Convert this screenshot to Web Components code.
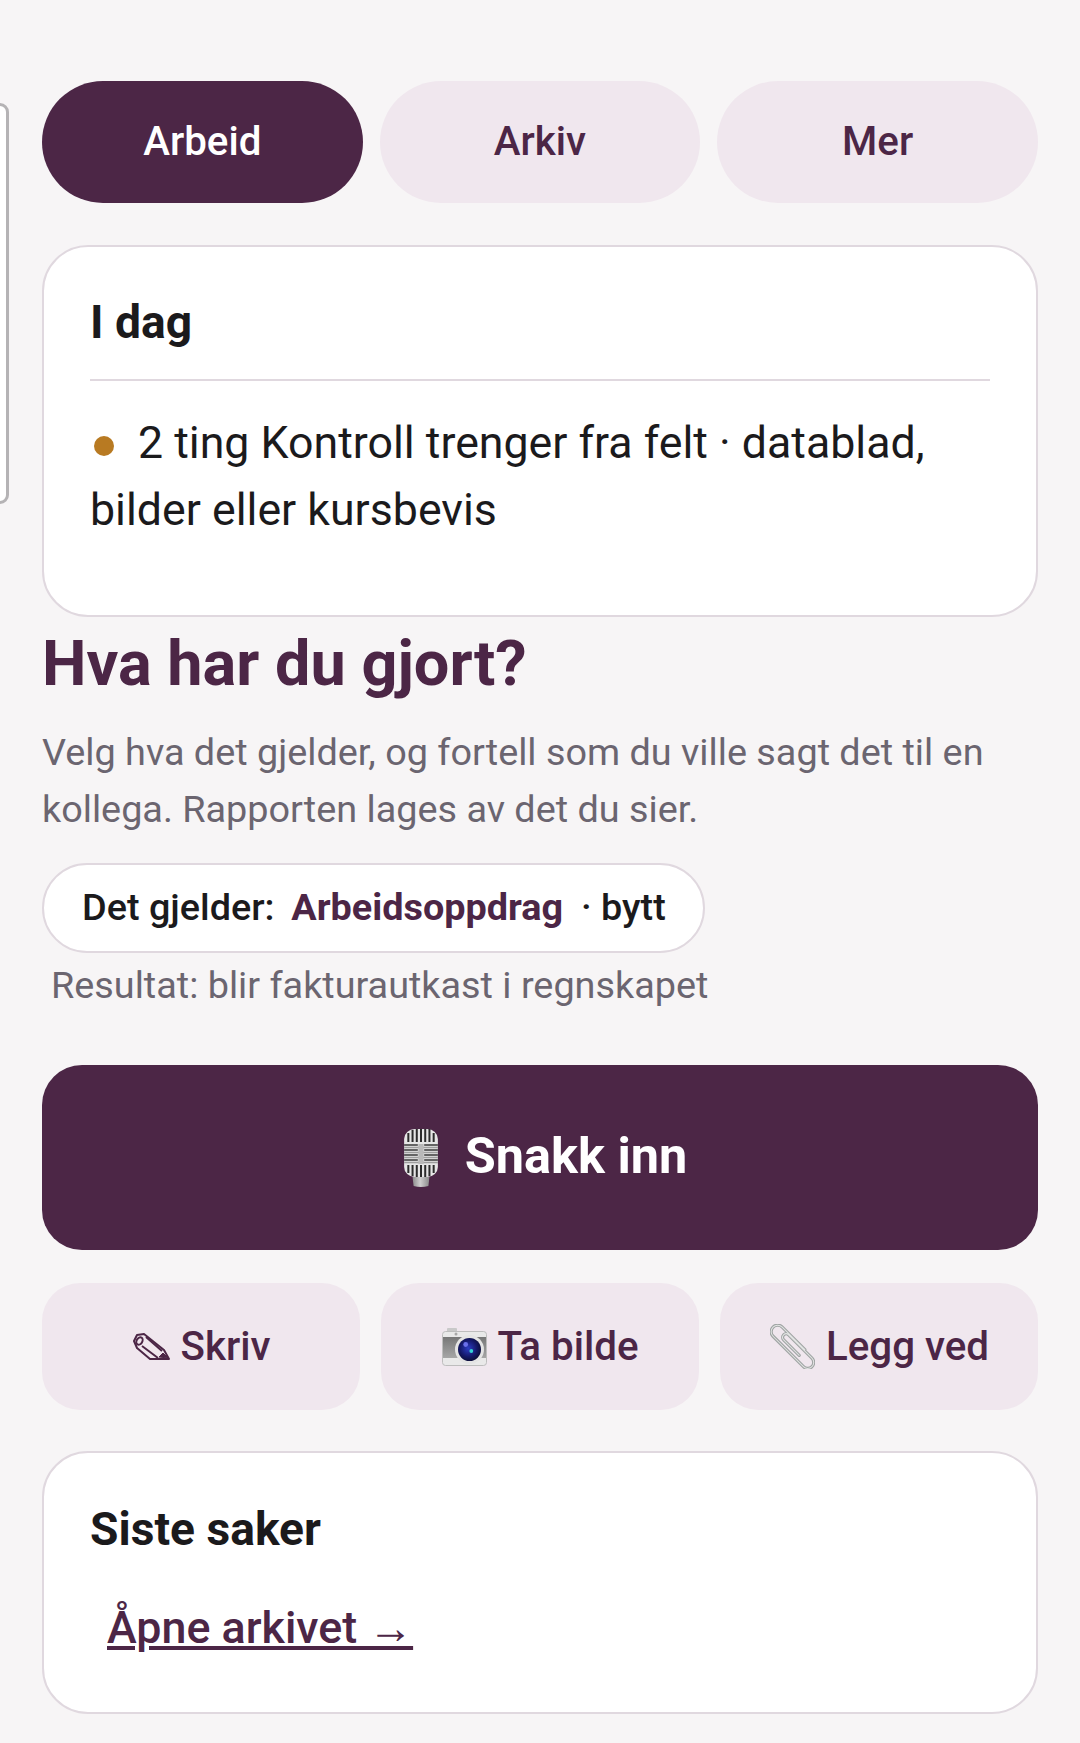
<!DOCTYPE html>
<html lang="no">
<head>
<meta charset="utf-8">
<title>Hva har du gjort?</title>
<style>
  html, body { margin: 0; padding: 0; background: #f7f5f6; }
  body { font-family: Roboto, "Liberation Sans", sans-serif; color: #1b1a1c; }
</style>
</head>
<body>
<work-page>
  <side-sliver slot="overlay"></side-sliver>
  <tab-bar>
    <tab-pill active>Arbeid</tab-pill>
    <tab-pill>Arkiv</tab-pill>
    <tab-pill>Mer</tab-pill>
  </tab-bar>
  <info-card heading="I dag">
    <span class="dot"></span>2 ting Kontroll trenger fra felt · datablad, bilder eller kursbevis
  </info-card>
  <intro-text heading="Hva har du gjort?">Velg hva det gjelder, og fortell som du ville sagt det til en kollega. Rapporten lages av det du sier.</intro-text>
  <subject-pill value="Arbeidsoppdrag" note="Resultat: blir fakturautkast i regnskapet"></subject-pill>
  <talk-button>
    <svg slot="icon" width="38" height="58" viewBox="0 0 36 58" preserveAspectRatio="none">
      <defs>
        <linearGradient id="neck" x1="0" x2="1" y1="0" y2="0">
          <stop offset="0" stop-color="#8c8c8c"/><stop offset=".45" stop-color="#cfcfcf"/><stop offset="1" stop-color="#8a8a8a"/>
        </linearGradient>
      </defs>
      <path d="M10 48h16l-1 9q-7 2-14 0z" fill="url(#neck)"/>
      <rect x="2" y="0" width="32" height="48" rx="10" fill="#e6e6e6"/>
      <path d="M6 4v9M10 1v12M14 0v13M18 0v13M22 0v13M26 0v13M30 4v9M6 36v8M10 36v11M14 36v12M18 36v12M22 36v12M26 36v11M30 36v8" stroke="#2b2b2b" stroke-width="1.9"/>
      <path d="M2 16h13M21 16h13M2 21h13M21 21h13M2 26h13M21 26h13M2 31h13M21 31h13" stroke="#3a3a3a" stroke-width="1.6"/>
      <path d="M2 18.5h32M2 23.5h32M2 28.5h32M2 33.5h32" stroke="#9d9d9d" stroke-width="1.4"/>
      <rect x="15.5" y="15" width="5" height="20" fill="#b9b9b9"/>
    </svg>
    Snakk inn
  </talk-button>
  <action-row>
    <action-button box="40" gap="9">
      <svg slot="icon" width="37" height="27" viewBox="0 0 37 27" fill="none" stroke="#4c2646" stroke-width="2" stroke-linejoin="round">
        <path d="M1 8 4 2l7-1 20 16 5 9H17L4 15z"/>
        <ellipse cx="6.5" cy="8" rx="2.8" ry="4" transform="rotate(30 6.5 8)"/>
        <path d="M9 13 25 25M13 4 29 18"/>
        <path d="M26 24l4-4 5 5z" fill="#4c2646" stroke-width="1"/>
      </svg>
      Skriv
    </action-button>
    <action-button box="46" gap="10">
      <svg slot="icon" width="45" height="38" viewBox="0 0 45 38">
        <defs>
          <linearGradient id="band" x1="0" x2="0" y1="0" y2="1">
            <stop offset="0" stop-color="#777"/><stop offset="1" stop-color="#a6a6a6"/>
          </linearGradient>
          <radialGradient id="glass" cx=".45" cy=".45" r=".6">
            <stop offset="0" stop-color="#2c3cc4"/><stop offset=".6" stop-color="#15196a"/><stop offset="1" stop-color="#0a0c30"/>
          </radialGradient>
        </defs>
        <rect x="5" y="0" width="10" height="6" rx="1" fill="#c9c9c9"/>
        <rect x=".5" y="3.5" width="44" height="34" rx="3" fill="#e9e9e9" stroke="#bdbdbd"/>
        <rect x="1" y="9" width="43" height="21" fill="url(#band)"/>
        <circle cx="14" cy="6" r="1.5" fill="#a8a8a8"/>
        <circle cx="27.5" cy="21.5" r="14.5" fill="#e4e4e4"/>
        <circle cx="27.5" cy="21.5" r="11.5" fill="url(#glass)"/>
        <circle cx="23.7" cy="16.5" r="2.4" fill="#6a70ea"/>
        <circle cx="29.3" cy="23" r="1.9" fill="#36d3d6"/>
      </svg>
      Ta bilde
    </action-button>
    <action-button box="47" gap="10">
      <svg slot="icon" width="45" height="45" viewBox="0 0 45 45" fill="none" stroke-linecap="round">
        <g transform="translate(22.5 22.5) rotate(45)">
          <path d="M11-6.5H-21A6.5 6.5 0 0 0-21 6.5H22A6 6 0 0 0 22-5.5H-11A3.5 3.5 0 0 0-11 1.5H11" stroke="#a0a5a4" stroke-width="3.2"/>
          <path d="M11-6.5H-21A6.5 6.5 0 0 0-21 6.5H22A6 6 0 0 0 22-5.5H-11A3.5 3.5 0 0 0-11 1.5H11" stroke="#e2e4e3" stroke-width="1"/>
        </g>
      </svg>
      Legg ved
    </action-button>
  </action-row>
  <recent-card heading="Siste saker" link="Åpne arkivet →"></recent-card>
</work-page>
<script>
class WorkPage extends HTMLElement {
  constructor() {
    super()
    this.shadow = this.attachShadow({ mode: 'open' })
    this.shadow.innerHTML = /*html*/`
    <style>
      :host { display: block; position: relative; width: 1080px; height: 1743px; overflow: hidden; }
      .column { display: flex; flex-direction: column; padding: 81px 42px 0; }
    </style>
    <slot name="overlay"></slot>
    <div class="column"><slot></slot></div>
    `
  }
}

class SideSliver extends HTMLElement {
  constructor() {
    super()
    this.attachShadow({ mode: 'open' }).innerHTML = /*html*/`
    <style>
      :host {
        display: block; position: absolute; left: -30px; top: 103px; box-sizing: border-box;
        width: 39px; height: 401px; background: #fff;
        border: 3px solid #b5b3b5; border-radius: 9px;
      }
    </style>
    `
  }
}

class TabBar extends HTMLElement {
  constructor() {
    super()
    this.attachShadow({ mode: 'open' }).innerHTML = /*html*/`
    <style>
      :host { display: grid; grid-template-columns: repeat(3, 1fr); gap: 17px; margin-bottom: 42px; }
    </style>
    <slot></slot>
    `
  }
}

class TabPill extends HTMLElement {
  constructor() {
    super()
    this.attachShadow({ mode: 'open' }).innerHTML = /*html*/`
    <style>
      :host {
        display: flex; align-items: center; justify-content: center; height: 122px;
        border-radius: 61px; background: #f0e7ee; color: #4c2646;
        font: 500 40.3px Roboto, sans-serif; padding-bottom: 1px; box-sizing: border-box;
      }
      :host([active]) { background: #4c2646; color: #fff; }
    </style>
    <slot></slot>
    `
  }
}

class InfoCard extends HTMLElement {
  constructor() {
    super()
    this.attachShadow({ mode: 'open' }).innerHTML = /*html*/`
    <style>
      :host {
        display: block; box-sizing: border-box; height: 372px; padding: 49px 46px;
        background: #fff; border: 2px solid #e0d8df; border-radius: 46px;
      }
      h2 { margin: 0; font: 700 46.2px/52px Roboto, sans-serif; color: #1b1a1c; padding-bottom: 31px; border-bottom: 2px solid #e0d8df; }
      .body { margin-top: 29px; font: 400 44.7px/67px Roboto, sans-serif; }
      ::slotted(.dot) {
        display: inline-block; width: 20px; height: 20px; border-radius: 50%;
        background: #b87a22; margin: 0 24px 0 4px; vertical-align: 2px;
      }
    </style>
    <h2></h2>
    <div class="body"><slot></slot></div>
    `
    this.shadowRoot.querySelector('h2').textContent = this.getAttribute('heading')
  }
}

class IntroText extends HTMLElement {
  constructor() {
    super()
    this.attachShadow({ mode: 'open' }).innerHTML = /*html*/`
    <style>
      :host { display: block; }
      h1 { margin: 15px 0 28px; font: 700 63px/64px Roboto, sans-serif; color: #4c2646; }
      p { margin: 0 0 25px; font: 400 37.8px/57px Roboto, sans-serif; color: #6b6570; }
    </style>
    <h1></h1>
    <p><slot></slot></p>
    `
    this.shadowRoot.querySelector('h1').textContent = this.getAttribute('heading')
  }
}

class SubjectPill extends HTMLElement {
  constructor() {
    super()
    this.attachShadow({ mode: 'open' }).innerHTML = /*html*/`
    <style>
      :host { display: block; margin-bottom: 55px; }
      .pill {
        display: inline-flex; align-items: center; box-sizing: border-box; height: 90px; padding: 0 37px 2px 38px;
        background: #fff; border: 2px solid #e0d8df; border-radius: 45px;
        font: 500 37.8px Roboto, sans-serif; color: #1b1a1c; white-space: pre;
      }
      b { font-weight: 700; color: #4c2646; margin: 0 -1px 0 -2px; }
      .note { margin: 7px 0 0 9px; font: 400 37.8px/50px Roboto, sans-serif; color: #6b6570; }
    </style>
    <div class="pill">Det gjelder:  <b></b>  · bytt</div>
    <div class="note"></div>
    `
    this.shadowRoot.querySelector('b').textContent = this.getAttribute('value')
    this.shadowRoot.querySelector('.note').textContent = this.getAttribute('note')
  }
}

class TalkButton extends HTMLElement {
  constructor() {
    super()
    this.attachShadow({ mode: 'open' }).innerHTML = /*html*/`
    <style>
      :host {
        display: flex; align-items: center; justify-content: center; gap: 15px; height: 185px; margin-bottom: 33px;
        background: #4c2646; color: #fff; border-radius: 40px;
        font: 700 50.4px Roboto, sans-serif;
      }
      .icon { display: flex; justify-content: center; width: 57px; }
      .label { margin-bottom: 4px; }
    </style>
    <span class="icon"><slot name="icon"></slot></span><span class="label"><slot></slot></span>
    `
  }
}

class ActionRow extends HTMLElement {
  constructor() {
    super()
    this.attachShadow({ mode: 'open' }).innerHTML = /*html*/`
    <style>
      :host { display: grid; grid-template-columns: repeat(3, 1fr); gap: 21px; margin-bottom: 41px; }
    </style>
    <slot></slot>
    `
  }
}

class ActionButton extends HTMLElement {
  constructor() {
    super()
    this.attachShadow({ mode: 'open' }).innerHTML = /*html*/`
    <style>
      :host {
        display: flex; align-items: center; justify-content: center; height: 127px;
        background: #f0e7ee; color: #4c2646; border-radius: 38px;
        font: 500 40.3px Roboto, sans-serif; white-space: nowrap;
      }
      .icon { display: flex; justify-content: center; }
    </style>
    <span class="icon"><slot name="icon"></slot></span><span><slot></slot></span>
    `
    const icon = this.shadowRoot.querySelector('.icon')
    icon.style.width = this.getAttribute('box') + 'px'
    icon.style.marginRight = this.getAttribute('gap') + 'px'
  }
}

class RecentCard extends HTMLElement {
  constructor() {
    super()
    this.attachShadow({ mode: 'open' }).innerHTML = /*html*/`
    <style>
      :host {
        display: block; box-sizing: border-box; height: 263px; padding: 50px 46px;
        background: #fff; border: 2px solid #e0d8df; border-radius: 46px;
      }
      h3 { margin: 0 0 47px; font: 700 46.2px/52px Roboto, sans-serif; color: #1b1a1c; }
      a { margin-left: 17px; font: 500 44.8px/52px Roboto, sans-serif; color: #4c2646; text-decoration: underline; }
    </style>
    <h3></h3>
    <a href="#"></a>
    `
    this.shadowRoot.querySelector('h3').textContent = this.getAttribute('heading')
    this.shadowRoot.querySelector('a').textContent = this.getAttribute('link')
  }
}

customElements.define('work-page', WorkPage)
customElements.define('side-sliver', SideSliver)
customElements.define('tab-bar', TabBar)
customElements.define('tab-pill', TabPill)
customElements.define('info-card', InfoCard)
customElements.define('intro-text', IntroText)
customElements.define('subject-pill', SubjectPill)
customElements.define('talk-button', TalkButton)
customElements.define('action-row', ActionRow)
customElements.define('action-button', ActionButton)
customElements.define('recent-card', RecentCard)
</script>
</body>
</html>
